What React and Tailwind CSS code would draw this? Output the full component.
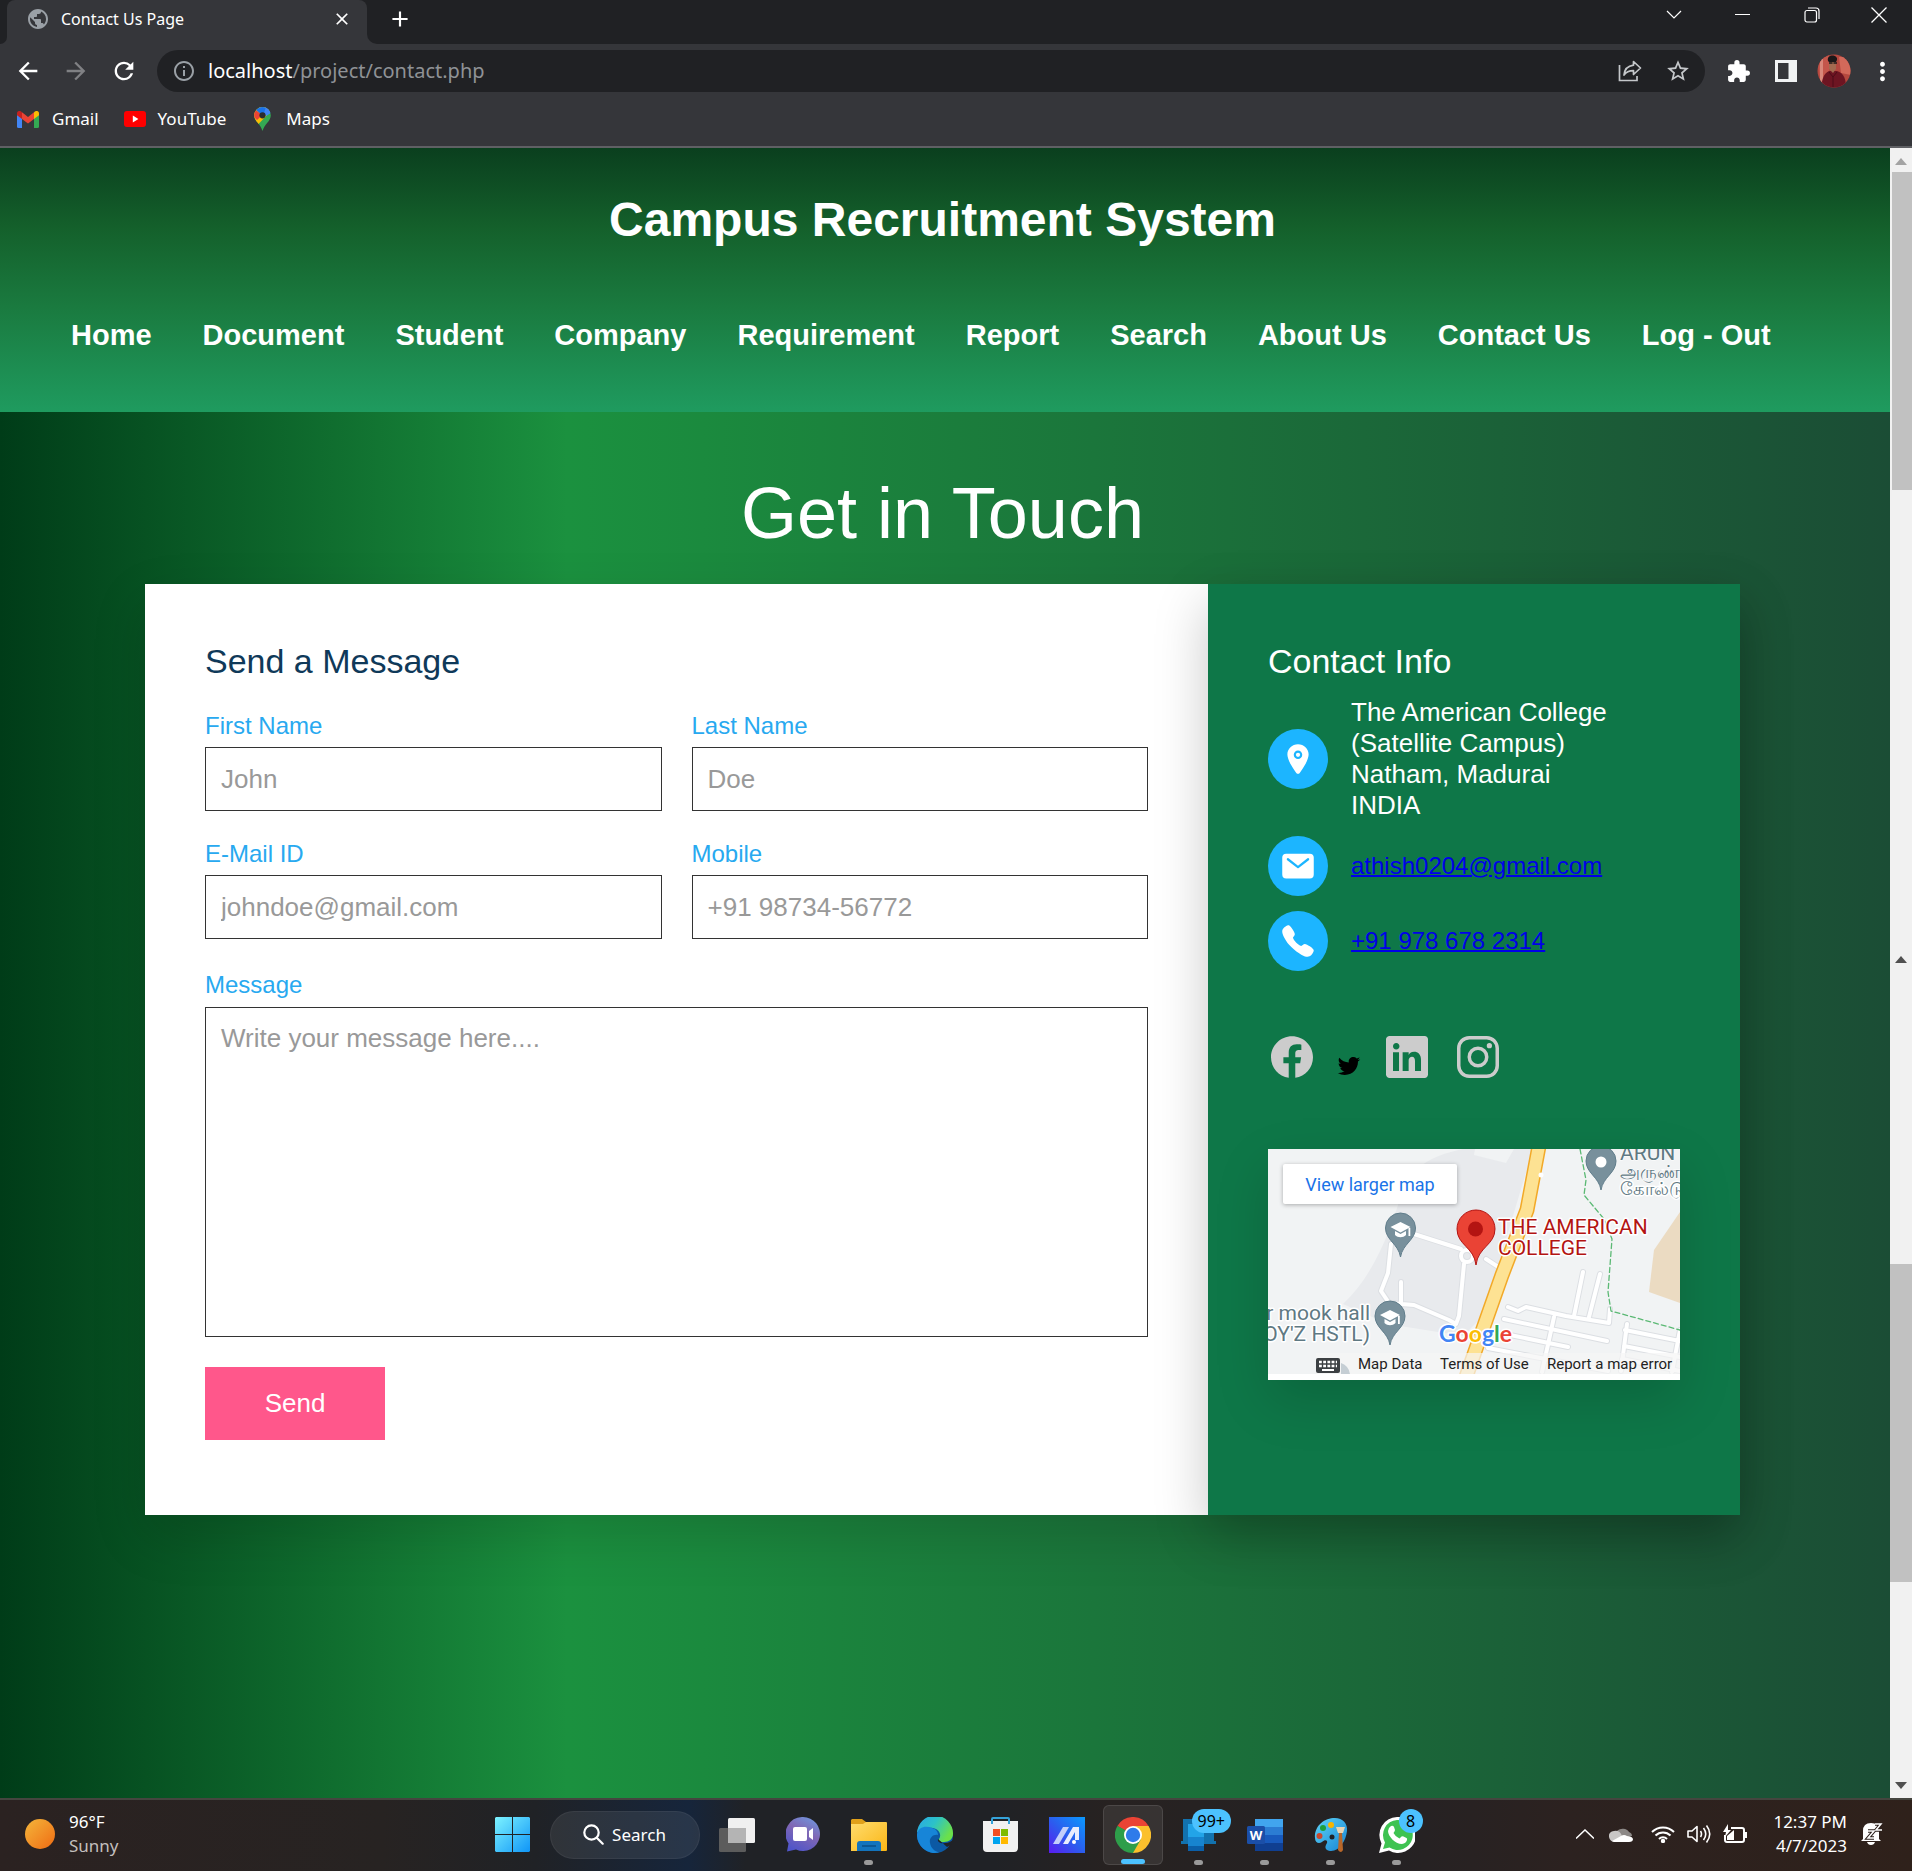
import React from "react";
import {
  MdArrowBack,
  MdArrowForward,
  MdRefresh,
  MdStarBorder,
  MdExtension,
  MdPublic,
  MdInfoOutline,
  MdMoreVert,
  MdAdd,
  MdClose,
} from "react-icons/md";
import {
  IoLocation,
  IoMail,
  IoCall,
  IoLogoFacebook,
  IoLogoTwitter,
  IoLogoLinkedin,
  IoLogoInstagram,
} from "react-icons/io5";

/* ---------- Browser chrome ---------- */

function GmailIcon() {
  return (
    <svg width="22" height="17" viewBox="0 0 22 17" aria-hidden="true">
      <path d="M0 3v12.500q0 1.500 1.500 1.500H5V7z" fill="#4285f4" />
      <path d="M22 3v12.500q0 1.500-1.500 1.500H17V7z" fill="#34a853" />
      <path d="M17 1.500V8l5-3.700V2.400C22 .2 19.500-.8 17.800.6z" fill="#fbbc04" />
      <path d="M5 1.500V8L0 4.300V2.400C0 .2 2.500-.8 4.200.6z" fill="#c5221f" />
      <path d="M5 8V1.300l6 4.600 6-4.600V8l-6 4.600z" fill="#ea4335" />
    </svg>
  );
}

function YouTubeIcon() {
  return (
    <svg width="22" height="16" viewBox="0 0 22 16" aria-hidden="true">
      <rect width="22" height="16" rx="3" fill="#f00" />
      <path d="M8.800 4.600v6.800l5.600-3.400z" fill="#fff" />
    </svg>
  );
}

function MapsIcon() {
  return (
    <svg width="17" height="24" viewBox="0 0 17 24" aria-hidden="true">
      <defs>
        <clipPath id="mapsPin">
          <path d="M8.500 0A8.300 8.300 0 0 0 .2 8.300c0 3 1.500 5.200 3.700 7.800 2 2.400 3.300 4.200 4.600 7.900 1.300-3.700 2.600-5.500 4.600-7.900 2.200-2.600 3.700-4.800 3.700-7.800A8.300 8.300 0 0 0 8.500 0z" />
        </clipPath>
      </defs>
      <g clipPath="url(#mapsPin)">
        <rect width="17" height="24" fill="#34a853" />
        <path d="M0 0h17v4L4 17.500 0 12z" fill="#fbbc04" />
        <path d="M0 2l8.500 6L3 13 0 10z" fill="#ea4335" />
        <path d="M2 0h15v5L8.500 8.500 2 3z" fill="#1a73e8" />
        <path d="M12 0h5v6l-5 3-2-3z" fill="#4285f4" />
      </g>
      <circle cx="8.500" cy="8.300" r="3.100" fill="#2b2c30" />
    </svg>
  );
}

function ShareIcon() {
  return (
    <svg width="24" height="24" viewBox="0 0 24 24" fill="none" stroke="#c4c7ca" strokeWidth="1.700" aria-hidden="true">
      <path d="M1.500 6v15.500h17.500V17" />
      <path d="M15.500 2.500l7 6.500-7 6.500v-3.800c-4.500 0-7.500 1.300-9.500 4.300.5-5 3.500-9 9.500-9.800z" strokeLinejoin="round" />
    </svg>
  );
}

function Avatar() {
  return (
    <svg width="34" height="34" viewBox="0 0 34 34" aria-hidden="true">
      <defs>
        <clipPath id="avatarClip">
          <circle cx="17" cy="17" r="16.500" />
        </clipPath>
      </defs>
      <g clipPath="url(#avatarClip)">
        <rect width="34" height="34" fill="#b5483f" />
        <path d="M0 4l12-4v26l-8 4z" fill="#c4564b" />
        <path d="M3 2h3v28H3z" fill="#d9877a" />
        <path d="M22 3h12v18l-10-2z" fill="#d2695a" />
        <path d="M4 34c1-8 2-14 8-17h8c7 2 9 8 9 17z" fill="#6d1522" />
        <path d="M12 18l4 5 4-5M16 23v10" fill="none" stroke="#4d0d18" />
        <path d="M12 6h7v9l-3 4-4-4z" fill="#a36a50" />
        <path d="M11 7c-2-7 10-7 9-1l-1 2h-7z" fill="#1c1718" />
        <path d="M12 9h3.500M16.500 9H20" stroke="#211a1a" strokeWidth="1.500" />
      </g>
    </svg>
  );
}

function BrowserChrome() {
  const iconBtn = "flex h-8 w-12 items-center justify-center";
  return (
    <div className="bg-[#35363a] font-['Noto_Sans',sans-serif] text-white">
      <div className="flex h-11 items-start bg-[#202124]">
        <div className="h-11 w-[7px] bg-[#35363a]">
          <div className="h-full w-full rounded-br-[10px] bg-[#202124]" />
        </div>
        <div className="flex h-11 w-[360px] items-center rounded-t-lg bg-[#35363a] px-[19px] pb-[6px]">
          <MdPublic className="mr-[11px] h-6 w-6 text-[#9aa0a6]" />
          <span className="grow text-[16px]">Contact Us Page</span>
          <button aria-label="Close tab" className="-mr-1">
            <MdClose className="h-5 w-5" />
          </button>
        </div>
        <div className="h-11 w-[12px] bg-[#35363a]">
          <div className="h-full w-full rounded-bl-[10px] bg-[#202124]" />
        </div>
        <button aria-label="New tab" className="ml-[8px] mt-[6px]">
          <MdAdd className="h-[26px] w-[26px]" />
        </button>
        <div className="ml-auto flex">
          <button aria-label="Search tabs" className="flex h-[29px] w-[69px] items-center justify-center">
            <svg width="16" height="9" viewBox="0 0 16 9" fill="none" stroke="#fff" strokeWidth="1.200"><path d="M1 1l7 7 7-7" /></svg>
          </button>
          <button aria-label="Minimize" className="flex h-[29px] w-[69px] items-center justify-center">
            <svg width="16" height="2" viewBox="0 0 16 2"><path d="M0 .5h15" stroke="#fff" /></svg>
          </button>
          <button aria-label="Restore" className="flex h-[29px] w-[69px] items-center justify-center">
            <svg width="16" height="16" viewBox="0 0 16 16" fill="none" stroke="#fff" strokeWidth="1.200">
              <rect x="1" y="3.500" width="11.500" height="11.500" rx="2" />
              <path d="M4 1h8q3 0 3 3v8" />
            </svg>
          </button>
          <button aria-label="Close window" className="flex h-[29px] w-[66px] items-center justify-center">
            <svg width="16" height="16" viewBox="0 0 16 16" stroke="#fff" strokeWidth="1.300"><path d="M.5.5l15 15M15.500.5l-15 15" /></svg>
          </button>
        </div>
      </div>

      <div className="flex h-[54px] items-center pl-1 pr-[6px]">
        <button aria-label="Back" className={iconBtn}>
          <MdArrowBack className="h-7 w-7" />
        </button>
        <button aria-label="Forward" className={iconBtn}>
          <MdArrowForward className="h-7 w-7 text-[#808184]" />
        </button>
        <button aria-label="Reload" className={iconBtn}>
          <MdRefresh className="h-7 w-7" />
        </button>
        <div className="ml-[9px] mr-[9px] flex h-[42px] grow items-center rounded-full bg-[#202124] pl-[15px] pr-[3px]">
          <MdInfoOutline className="mr-[12px] h-6 w-6 text-[#9aa0a6]" />
          <p className="grow text-[20px] text-[#8f9296]">
            <span className="text-white">localhost</span>/project/contact.php
          </p>
          <button aria-label="Share" className={iconBtn}>
            <ShareIcon />
          </button>
          <button aria-label="Bookmark" className={iconBtn}>
            <MdStarBorder className="h-[26px] w-[26px] text-[#c4c7ca]" />
          </button>
        </div>
        <button aria-label="Extensions" className={iconBtn}>
          <MdExtension className="h-[25px] w-[25px]" />
        </button>
        <button aria-label="Side panel" className={iconBtn}>
          <svg width="22" height="22" viewBox="0 0 22 22"><path fillRule="evenodd" d="M0 0h22v22H0zM3 3v16h10.500V3z" fill="#f1f3f4" /></svg>
        </button>
        <button aria-label="Profile" className={iconBtn}>
          <Avatar />
        </button>
        <button aria-label="Menu" className={iconBtn}>
          <MdMoreVert className="h-[29px] w-[29px]" />
        </button>
      </div>

      <div className="flex h-[50px] items-center border-b-2 border-[#5f6064] pb-[6px] pl-[17px] text-[17px]">
        <a href="#gmail" className="flex items-center gap-[13px]"><GmailIcon />Gmail</a>
        <a href="#youtube" className="ml-[25px] flex items-center gap-[12px]"><YouTubeIcon />YouTube</a>
        <a href="#maps" className="ml-[28px] flex items-center gap-[15px]"><MapsIcon />Maps</a>
      </div>
    </div>
  );
}

/* ---------- Page ---------- */

const NAV = ["Home", "Document", "Student", "Company", "Requirement", "Report", "Search", "About Us", "Contact Us", "Log - Out"];

function PageHeader() {
  return (
    <header className="bg-[linear-gradient(to_bottom,#0a3f1e_0%,#14602b_30%,#1a7a3f_60%,#1f9b5f_100%)] pb-[60px] pt-11 text-white">
      <h1 className="pr-[5px] text-center text-[48px] font-bold leading-[55px]">Campus Recruitment System</h1>
      <nav className="mt-[71px] flex gap-[51px] pl-[71px] text-[29px] font-bold leading-[34px]">
        {NAV.map((n) => (
          <a key={n} href="#nav" className="whitespace-nowrap">{n}</a>
        ))}
      </nav>
    </header>
  );
}

function Field({ id, label, type, placeholder }) {
  return (
    <div>
      <label htmlFor={id} className="block text-[24px] leading-[28px] text-[#28a9f0]">{label}</label>
      <input
        id={id}
        type={type}
        placeholder={placeholder}
        className="mt-[7px] block h-16 w-full border border-[#333] bg-transparent px-[15px] text-[26px] placeholder:text-[#999]"
      />
    </div>
  );
}

function MessageForm() {
  return (
    <form className="px-[60px] pb-[75px] pt-[58px]" onSubmit={(e) => e.preventDefault()}>
      <h2 className="text-[34px] leading-[38px] text-[#0f3959]">Send a Message</h2>
      <div className="mt-[32px] grid grid-cols-2 gap-x-[30px] gap-y-[29px]">
        <Field id="first" label="First Name" type="text" placeholder="John" />
        <Field id="last" label="Last Name" type="text" placeholder="Doe" />
        <Field id="email" label="E-Mail ID" type="email" placeholder="johndoe@gmail.com" />
        <Field id="mobile" label="Mobile" type="tel" placeholder="+91 98734-56772" />
      </div>
      <label htmlFor="msg" className="mt-[32px] block text-[24px] leading-[28px] text-[#28a9f0]">Message</label>
      <textarea
        id="msg"
        placeholder="Write your message here...."
        className="mt-[8px] block h-[330px] w-full resize-none border border-[#333] bg-transparent px-[15px] py-[15px] text-[26px] leading-[30px] placeholder:text-[#999]"
      />
      <button type="submit" className="mt-[30px] block h-[73px] w-[180px] bg-[#ff578b] text-[26px] text-white">Send</button>
    </form>
  );
}

function InfoRow({ icon, children }) {
  return (
    <li className="flex items-center gap-[23px]">
      <span className="flex h-[60px] w-[60px] shrink-0 items-center justify-center rounded-full bg-[#1cb5ff] text-white">{icon}</span>
      {children}
    </li>
  );
}

function GreyPin({ x, y, children }) {
  return (
    <g transform={`translate(${x} ${y})`}>
      <path d="M0 44C-2 31-15 27-15 15a15 15 0 0 1 30 0C15 27 2 31 0 44z" fill="#78909c" stroke="#607d8b" />
      {children}
    </g>
  );
}

function Cap() {
  return (
    <g fill="#fff">
      <path d="M-10 14L0 9l10 5-10 5.500z" />
      <path d="M-5.500 18v4c3 3 8 3 11 0v-4L0 21z" />
      <path d="M8 15h1.800v8H8z" />
    </g>
  );
}

function CampusMap() {
  const halo = { stroke: "#fff", strokeWidth: 3, paintOrder: "stroke", strokeLinejoin: "round" };
  return (
    <div className="relative mt-[68px] w-[412px] max-w-full shadow-[0_20px_50px_rgba(0,0,0,0.15)]">
      <svg viewBox="0 0 412 231" className="block w-full font-[Roboto,sans-serif]" role="img" aria-label="Map of The American College">
        <rect width="412" height="231" fill="#f1f3f4" />
        <path d="M195 0c-25 5-50 15-60 40-12 40-28 85-60 115l45 20 75 12 20-20 50-167z" fill="#e8eaed" />
        <path d="M207 0h39l-8 14-32-8z" fill="#f1f3f4" />
        <path d="M412 63l-26 38-5 42 31 11z" fill="#ebdbc2" />
        <g fill="none" strokeLinecap="round" strokeLinejoin="round">
          {[["#dcdfe3", 6], ["#fff", 4]].map(([c, w]) => (
            <g key={c} stroke={c} strokeWidth={w}>
              <path d="M146 85l47 15M123 95l-3 29-7 18 8 12 25 2 35 15 7 4 3-8 5-52M133 154v-21M218 110l17 11" />
              <circle cx="199" cy="107" r="6" />
              <path d="M240 158l10 4 8-4 40 9 43 7 1-14M306 167l9-44M321 168l11-43M236 170l103 22M242 186l58 12M286 168l-12 55M359 175l-6 47M357 181l55 11M356 197l56 11M354 210l58 12M340 222l-120-23M412 181l-8 42" />
            </g>
          ))}
          <path d="M271-3l-12 64-25 65-36 102" stroke="#f2a928" strokeWidth="15" strokeLinecap="butt" />
          <path d="M271-3l-12 64-25 65-36 102" stroke="#fde293" strokeWidth="12" strokeLinecap="butt" />
          <path d="M312 0l6 31-2 15 20 24 8 20-4 53 3 19 69 19" stroke="#5bb974" strokeWidth="1.300" strokeDasharray="5 3" />
        </g>
        <circle cx="273" cy="26" r="2.500" fill="#fff" />
        <GreyPin x={132.500} y={64}><Cap /></GreyPin>
        <GreyPin x={122} y={152}><Cap /></GreyPin>
        <GreyPin x={333} y={-3}><circle cy="16" r="5.500" fill="#fff" /></GreyPin>
        <path d="M208 116c-2-18-19-20-19-36a19 19 0 0 1 38 0c0 16-17 18-19 36z" fill="#ea4335" stroke="#b31412" />
        <circle cx="207.500" cy="80" r="7.500" fill="#b31412" />
        <g style={halo} fontSize="21">
          <g fill="#b31412">
            <text x="230" y="85">THE AMERICAN</text>
            <text x="230" y="106">COLLEGE</text>
          </g>
          <g fill="#5f7983">
            <text x="102" y="171" textAnchor="end">r mook hall</text>
            <text x="102" y="192" textAnchor="end">OY&apos;Z HSTL)</text>
            <text x="352" y="46" fontSize="18">கோல்டு</text>
            <text x="352" y="29" fontSize="18" strokeWidth="1">அருண்</text>
            <text x="352" y="11" strokeWidth="1">ARUN</text>
          </g>
          <text x="171" y="193" fontSize="23" fontFamily="Lato" fontWeight="700">
            <tspan fill="#4285f4">G</tspan><tspan fill="#ea4335">o</tspan><tspan fill="#fbbc04">o</tspan><tspan fill="#4285f4">g</tspan><tspan fill="#34a853">l</tspan><tspan fill="#ea4335">e</tspan>
          </text>
        </g>
        <path d="M48 204h364v21H48z" fill="#f5f5f5" fillOpacity=".7" />
        <path d="M0 225h412v6H0z" fill="#fff" />
        <rect x="48" y="209" width="24" height="15" rx="2" fill="#3c4043" />
        <path d="M51 213h18M51 217h18" stroke="#fff" strokeWidth="2.500" strokeDasharray="2.800 1.400" />
        <path d="M54 221h12" stroke="#fff" strokeWidth="2" />
        <path d="M73 214q8 3 9 11h-9z" fill="#c5ced4" />
        <g fill="#222" fontSize="15">
          <text x="90" y="220">Map Data</text>
          <text x="172" y="220">Terms of Use</text>
          <text x="279" y="220">Report a map error</text>
        </g>
      </svg>
      <a href="#map" className="absolute left-[15px] top-[15px] flex h-10 w-[174px] items-center justify-center rounded-xs bg-white font-[Roboto,sans-serif] text-[18px] text-[#1a73e8] shadow-[0_1px_4px_rgba(0,0,0,0.3)]">
        View larger map
      </a>
    </div>
  );
}

function ContactInfo() {
  return (
    <section className="bg-[#0e7748] px-[60px] pt-[58px] shadow-[0_20px_50px_rgba(0,0,0,0.22)]">
      <h2 className="text-[34px] leading-[38px] text-white">Contact Info</h2>
      <ul className="mt-[17px] flex flex-col gap-[15px] text-[24px]">
        <InfoRow icon={<IoLocation className="h-[34px] w-[34px]" />}>
          <address className="text-[26px] not-italic leading-[31px] text-white">
            The American College<br />(Satellite Campus)<br />Natham, Madurai<br />INDIA
          </address>
        </InfoRow>
        <InfoRow icon={<IoMail className="h-9 w-9" />}>
          <a href="mailto:athish0204@gmail.com" className="text-[#0000e8] underline decoration-2">athish0204@gmail.com</a>
        </InfoRow>
        <InfoRow icon={<IoCall className="h-9 w-9" />}>
          <a href="tel:+919786782314" className="text-[#0000e8] underline decoration-2">+91 978 678 2314</a>
        </InfoRow>
      </ul>
      <div className="mt-[62px] flex items-center text-[#ccc]">
        <a href="#facebook" aria-label="Facebook"><IoLogoFacebook className="h-[48px] w-[48px]" /></a>
        <a href="#twitter" aria-label="Twitter" className="ml-[21px] pt-[17px] text-black"><IoLogoTwitter className="h-6 w-6" /></a>
        <a href="#linkedin" aria-label="LinkedIn" className="ml-[22px]"><IoLogoLinkedin className="h-[48px] w-[48px]" /></a>
        <a href="#instagram" aria-label="Instagram" className="ml-[23px]"><IoLogoInstagram className="h-[48px] w-[48px]" /></a>
      </div>
      <CampusMap />
    </section>
  );
}

function Arrow({ up, color }) {
  return (
    <svg width="12" height="7" viewBox="0 0 12 7" className="mx-auto block" aria-hidden="true">
      <path d={up ? "M0 7l6-7 6 7z" : "M0 0l6 7 6-7z"} fill={color} />
    </svg>
  );
}

function Scrollbars() {
  return (
    <div className="flex w-[22px] shrink-0 flex-col bg-[#f1f1f1]" aria-hidden="true">
      <div className="h-[804px] pt-[10px]">
        <Arrow up color="#a3a3a3" />
        <div className="ml-[2px] mt-[7px] h-[318px] bg-[#c1c1c1]" />
      </div>
      <div className="flex grow flex-col pb-[9px] pt-[4px]">
        <Arrow up color="#505050" />
        <div className="mb-auto mt-[301px] h-[318px] bg-[#c1c1c1]" />
        <Arrow color="#505050" />
      </div>
    </div>
  );
}

/* ---------- Taskbar ---------- */

function TaskItem({ label, dot, active, badge, badgeClass, children }) {
  return (
    <button aria-label={label} className="flex w-[66px] items-center justify-center">
      <span className={active ? "relative flex h-[60px] w-[60px] items-center justify-center rounded-md border border-white/10 bg-white/8" : "relative flex h-[60px] w-[60px] items-center justify-center"}>
        {children}
        {dot && <span className="absolute bottom-0 h-[5px] w-[9px] rounded-full bg-[#9a9a9a]" />}
        {active && <span className="absolute bottom-0 h-[5px] w-[24px] rounded-full bg-[#4cc2ff]" />}
        {badge && <span className={"absolute top-[4px] h-6 min-w-6 rounded-full bg-[#4cc2ff] px-[6px] text-[16px] leading-6 text-black " + badgeClass}>{badge}</span>}
      </span>
    </button>
  );
}

function Taskbar() {
  return (
    <footer className="grid h-[73px] grid-cols-[1fr_auto_1fr] items-center border-t-2 border-[#45453f] bg-[linear-gradient(to_right,#2b2221_0%,#272322_20%,#202226_28%,#16253b_36%,#202226_39%,#202226_52%,#272221_58%,#242224_72%,#2c2220_82%,#2f211b_100%)] pb-[2px] font-['Noto_Sans',sans-serif] text-[17px] text-white">
      <div className="flex items-center gap-[14px] pb-[2px] pl-[25px]">
        <span className="h-[30px] w-[30px] rounded-full bg-linear-to-br from-[#f3b53a] to-[#ee6a10]" />
        <p className="leading-6">96°F<br /><span className="text-[#c3bfbd]">Sunny</span></p>
      </div>

      <div className="flex h-full items-center pr-[3px]">
        <TaskItem label="Start">
          <svg width="35" height="35" viewBox="0 0 35 35">
            <defs><linearGradient id="win" gradientUnits="userSpaceOnUse" x1="0" y1="0" x2="35" y2="35"><stop stopColor="#7df3ff" /><stop offset="1" stopColor="#0f95f7" /></linearGradient></defs>
            <path fill="url(#win)" d="M1 0h16v17H0V1zM18 0h16l1 1v16H18zM0 18h17v17H1l-1-1zM18 18h17v16l-1 1H18z" />
          </svg>
        </TaskItem>
        <button className="mx-[4px] flex h-12 w-[150px] items-center justify-center gap-[8px] rounded-full border border-white/5 bg-white/8 text-[17px]">
          <svg width="21" height="21" viewBox="0 0 21 21" fill="none" stroke="#fff" strokeWidth="2.200" strokeLinecap="round"><circle cx="8.500" cy="8.500" r="7.200" /><path d="M14 14l5.700 5.700" /></svg>
          Search
        </button>
        <TaskItem label="Task view">
          <svg width="36" height="34" viewBox="0 0 36 34"><rect y="10" width="27" height="24" rx="1.500" fill="#5c5c5c" /><rect x="9" width="27" height="25" rx="1.500" fill="#f0f0f0" /><path d="M9 10h18v15H9z" fill="#b4b4b4" /></svg>
        </TaskItem>
        <TaskItem label="Chat">
          <svg width="34" height="35" viewBox="0 0 34 35">
            <defs><linearGradient id="chat" x1=".8" x2=".3" y2="1"><stop stopColor="#6f95dc" /><stop offset=".45" stopColor="#8067b4" /><stop offset="1" stopColor="#4f55c9" /></linearGradient></defs>
            <path d="M17 0a17 17 0 1 1-7 32.500L1 34.500l1.500-8A17 17 0 0 1 17 0z" fill="url(#chat)" />
            <rect x="7" y="10" width="14" height="14" rx="2" fill="#fff" /><path d="M23 14l4-3v12l-4-3z" fill="#fff" />
          </svg>
        </TaskItem>
        <TaskItem label="File Explorer" dot>
          <svg width="36" height="34" viewBox="0 0 36 34">
            <defs><linearGradient id="fold" x2="1" y2="1"><stop stopColor="#ffdc6e" /><stop offset="1" stopColor="#fbb615" /></linearGradient></defs>
            <path d="M1 1h10l4 3v6H0V2z" fill="#e0a01a" /><path d="M0 6h12l3-2h20q1 0 1 1v27q0 1-1 1H0z" fill="url(#fold)" />
            <path d="M6 33V26q0-3 3-3h18q3 0 3 3v7z" fill="#1374bd" /><path d="M11 28h14" stroke="#0b4f87" strokeWidth="1.500" />
          </svg>
        </TaskItem>
        <TaskItem label="Edge">
          <svg width="36" height="36" viewBox="0 0 36 36">
            <defs>
              <linearGradient id="ed1" x2="1" y2=".5"><stop stopColor="#2aa5e8" /><stop offset=".5" stopColor="#2cc2c8" /><stop offset="1" stopColor="#6be04a" /></linearGradient>
            </defs>
            <circle cx="18" cy="18" r="18" fill="#0c59a4" />
            <path d="M0 16A18 18 0 0 1 36 17c0 5-4 8-9 8-4 0-6-1-5-3 3-4 0-10-6-11C9 10 2 13 0 16z" fill="url(#ed1)" />
            <path d="M0 17C1 10 9 8 15 11c4 1 6 4 6 7-5-1-9 3-8 8 1 5 4 8 9 9.500A18 18 0 0 1 0 17z" fill="#1785d8" />
            <path d="M21 22c-1 3 3 5 7 4 4 0 6-2 8-3v4l-6 3z" fill="#202226" />
          </svg>
        </TaskItem>
        <TaskItem label="Microsoft Store">
          <svg width="35" height="35" viewBox="0 0 35 35">
            <path d="M9 8V2q0-1 1-1h15q1 0 1 1v6" fill="none" stroke="#35a3da" strokeWidth="2" />
            <path d="M0 4h35v27q0 4-4 4H4q-4 0-4-4z" fill="#f1f1f1" /><path d="M9 7V2M26 7V2" stroke="#35a3da" strokeWidth="2" />
            <path d="M10 12h7v7h-7z" fill="#f25022" /><path d="M18 12h7v7h-7z" fill="#7fba00" /><path d="M10 20h7v7h-7z" fill="#00a4ef" /><path d="M18 20h7v7h-7z" fill="#ffb900" />
          </svg>
        </TaskItem>
        <TaskItem label="MyASUS">
          <svg width="36" height="36" viewBox="0 0 36 36">
            <defs><linearGradient id="asus" x1="1" x2="0" y2="1"><stop stopColor="#0a9aff" /><stop offset=".5" stopColor="#2a5fee" /><stop offset="1" stopColor="#5a1bf0" /></linearGradient></defs>
            <path d="M0 0h36v36H0z" fill="url(#asus)" />
            <path d="M4 27l10-17h6L10 27z" fill="#c3cffb" /><path d="M14 27l10-17h6v13h-4v-8l-7 12z" fill="#e9eefe" /><circle cx="25" cy="25" r="2" fill="#fff" />
          </svg>
        </TaskItem>
        <TaskItem label="Chrome" active>
          <svg width="36" height="36" viewBox="0 0 36 36">
            <path d="M18 18L2.400 9A18 18 0 0 1 33.600 9z" fill="#ea4335" />
            <path d="M18 18L33.600 9A18 18 0 0 1 18 36z" fill="#fbc02d" />
            <path d="M18 18v18A18 18 0 0 1 2.400 9z" fill="#2e9e4a" />
            <path d="M18 9h15.600l-7.800 13.500L18 36l7.800-13.500z" fill="#fbc02d" />
            <path d="M10.200 22.500L2.400 9 10 13z" fill="#2e9e4a" /><path d="M25.800 22.500L18 36l-4-10z" fill="#2e9e4a" />
            <circle cx="18" cy="18" r="9" fill="#fff" /><circle cx="18" cy="18" r="7.200" fill="#2f7bea" />
          </svg>
        </TaskItem>
        <TaskItem label="Phone Link" dot badge="99+" badgeClass="left-[23px]">
          <svg width="36" height="32" viewBox="0 0 36 32">
            <path d="M2 0h31v22h2v3H0v-3h2z" fill="#1272ae" /><path d="M7 5h16v27H7z" fill="#22a4e8" /><path d="M7 18h16v9H7z" fill="#1784cf" /><path d="M7 27h16v5H7z" fill="#0b5fa8" />
          </svg>
        </TaskItem>
        <TaskItem label="Word" dot>
          <svg width="36" height="32" viewBox="0 0 36 32">
            <path d="M8 0h28v8H8z" fill="#41a5ee" /><path d="M8 8h28v8H8z" fill="#2b7cd3" /><path d="M8 16h28v8H8z" fill="#185abd" /><path d="M8 24h28v8H8z" fill="#103f91" />
            <rect y="7" width="18" height="18" rx="1.500" fill="#1b4fa8" />
            <text x="9" y="20.500" fontSize="13" fontWeight="700" fill="#fff" textAnchor="middle">W</text>
          </svg>
        </TaskItem>
        <TaskItem label="Paint" dot>
          <svg width="36" height="36" viewBox="0 0 36 36">
            <defs><linearGradient id="pal" x2="1" y2="1"><stop stopColor="#5fd4f7" /><stop offset="1" stopColor="#1583d2" /></linearGradient></defs>
            <path d="M20 1c9-1 15 5 14 13-1 10-8 21-17 20-6-1-5-5-3-8 1-3-2-4-5-1-3 2-7 1-7-4C1 10 10 2 20 1z" fill="url(#pal)" />
            <circle cx="18" cy="8" r="3" fill="#f7b500" /><circle cx="10" cy="11" r="3" fill="#1d9f3c" /><circle cx="6.500" cy="19" r="3" fill="#c8482d" /><circle cx="19" cy="20" r="2.500" fill="#202226" />
            <path d="M23 10h9l-2 6h-5z" fill="#e8d5b5" /><path d="M26 16h3l1 17q-2 4-5 0z" fill="#b8672a" />
          </svg>
        </TaskItem>
        <TaskItem label="WhatsApp" dot badge="8" badgeClass="left-[32px]">
          <svg width="36" height="36" viewBox="0 0 36 36">
            <path d="M18 0a18 18 0 1 1-8 33.500L0 36l2.500-9.500A18 18 0 0 1 18 0z" fill="#fff" />
            <path d="M18 3a15 15 0 1 1-7.500 27.500L4 32l2-6.500A15 15 0 0 1 18 3z" fill="#3ec351" />
            <path d="M12 9q2-1 3 1l1 3q0 1-1.500 3 2 4 6 5.500l2-2q1-.5 2 0l3 1.500q1 .5.500 2-1 3.500-5 4C16 27 9 19 9 14q0-3 3-5z" fill="#fff" />
          </svg>
        </TaskItem>
      </div>

      <div className="flex items-center justify-end pb-[2px] pr-[29px]">
        <svg width="18" height="10" viewBox="0 0 18 10" fill="none" stroke="#fff" strokeWidth="1.500"><path d="M0 9.500L9 1l9 8.500" /></svg>
        <svg width="24" height="16" viewBox="0 0 24 16" className="ml-[15px]"><path d="M8 5a7 5.500 0 0 1 12 1q3 1 3 4H6z" fill="#8d8987" /><path d="M0 11a5 5 0 0 1 5-6q6-1 8 5L6 16q-5 0-6-5z" fill="#c9c7c6" /><path d="M3 15l9-5q3-2 6 0 5 0 6 3 0 3-4 3H5z" fill="#fff" /></svg>
        <svg width="24" height="18" viewBox="0 0 24 18" className="ml-[18px]" fill="none" stroke="#fff" strokeWidth="2"><path d="M1 7a15.500 15.500 0 0 1 22 0M4.500 10.500a10.600 10.600 0 0 1 15 0M8 14a5.600 5.600 0 0 1 8 0" /><circle cx="12" cy="16" r="1.200" fill="#fff" /></svg>
        <svg width="25" height="20" viewBox="0 0 25 20" className="ml-[12px]" fill="none" stroke="#fff" strokeWidth="1.600"><path d="M1 7h4l5-4.500v15L5 13H1zM13.500 7q2 3 0 6M16.500 4q4.500 6 0 12M19.500 1.500q6.500 8.500 0 17" strokeLinejoin="round" /></svg>
        <svg width="25" height="20" viewBox="0 0 25 20" className="ml-[11px]"><path d="M8 4h11q2 0 2 2v10q0 2-2 2H4q-2 0-2-2v-5" fill="none" stroke="#fff" strokeWidth="2" /><path d="M22 8h2v6h-2zM4 12l7-6v10H4zM5 0L0 8h3l-1 5 6-7H5z" fill="#fff" /></svg>
        <time className="ml-[25px] text-right leading-6">12:37 PM<br />4/7/2023</time>
        <svg width="22" height="24" viewBox="0 0 22 24" className="ml-[14px]"><path d="M2 17V9q0-8 8-8t8 8v8l2 2H0zM6 20h8q-1 3-4 3t-4-3z" fill="#fff" /><path d="M7 9h6l-6 7h6M14 2h6l-5 6h6" fill="none" stroke="#2d211d" strokeWidth="3.500" /><path d="M7 9h6l-6 7h6M14 2h6l-5 6h6" fill="none" stroke="#fff" strokeWidth="1.500" /></svg>
      </div>
    </footer>
  );
}

export default function App() {
  return (
    <div className="flex min-h-screen flex-col bg-white pb-[5px]">
      <BrowserChrome />
      <div className="flex grow">
        <div className="flex min-w-0 grow flex-col font-['Liberation_Sans',Arial,sans-serif]">
          <PageHeader />
          <main className="grow bg-[linear-gradient(to_right,#003c18_0%,#1b913f_30%,#1b4d35_100%)] pl-[145px] pr-[150px] pt-[60px]">
            <h2 className="mb-[29px] text-center text-[72px] leading-[83px] text-white">Get in Touch</h2>
            <div className="grid grid-cols-[2fr_1fr] bg-white shadow-[0_20px_50px_rgba(0,0,0,0.15)]">
              <MessageForm />
              <ContactInfo />
            </div>
          </main>
        </div>
        <Scrollbars />
      </div>
      <Taskbar />
    </div>
  );
}
